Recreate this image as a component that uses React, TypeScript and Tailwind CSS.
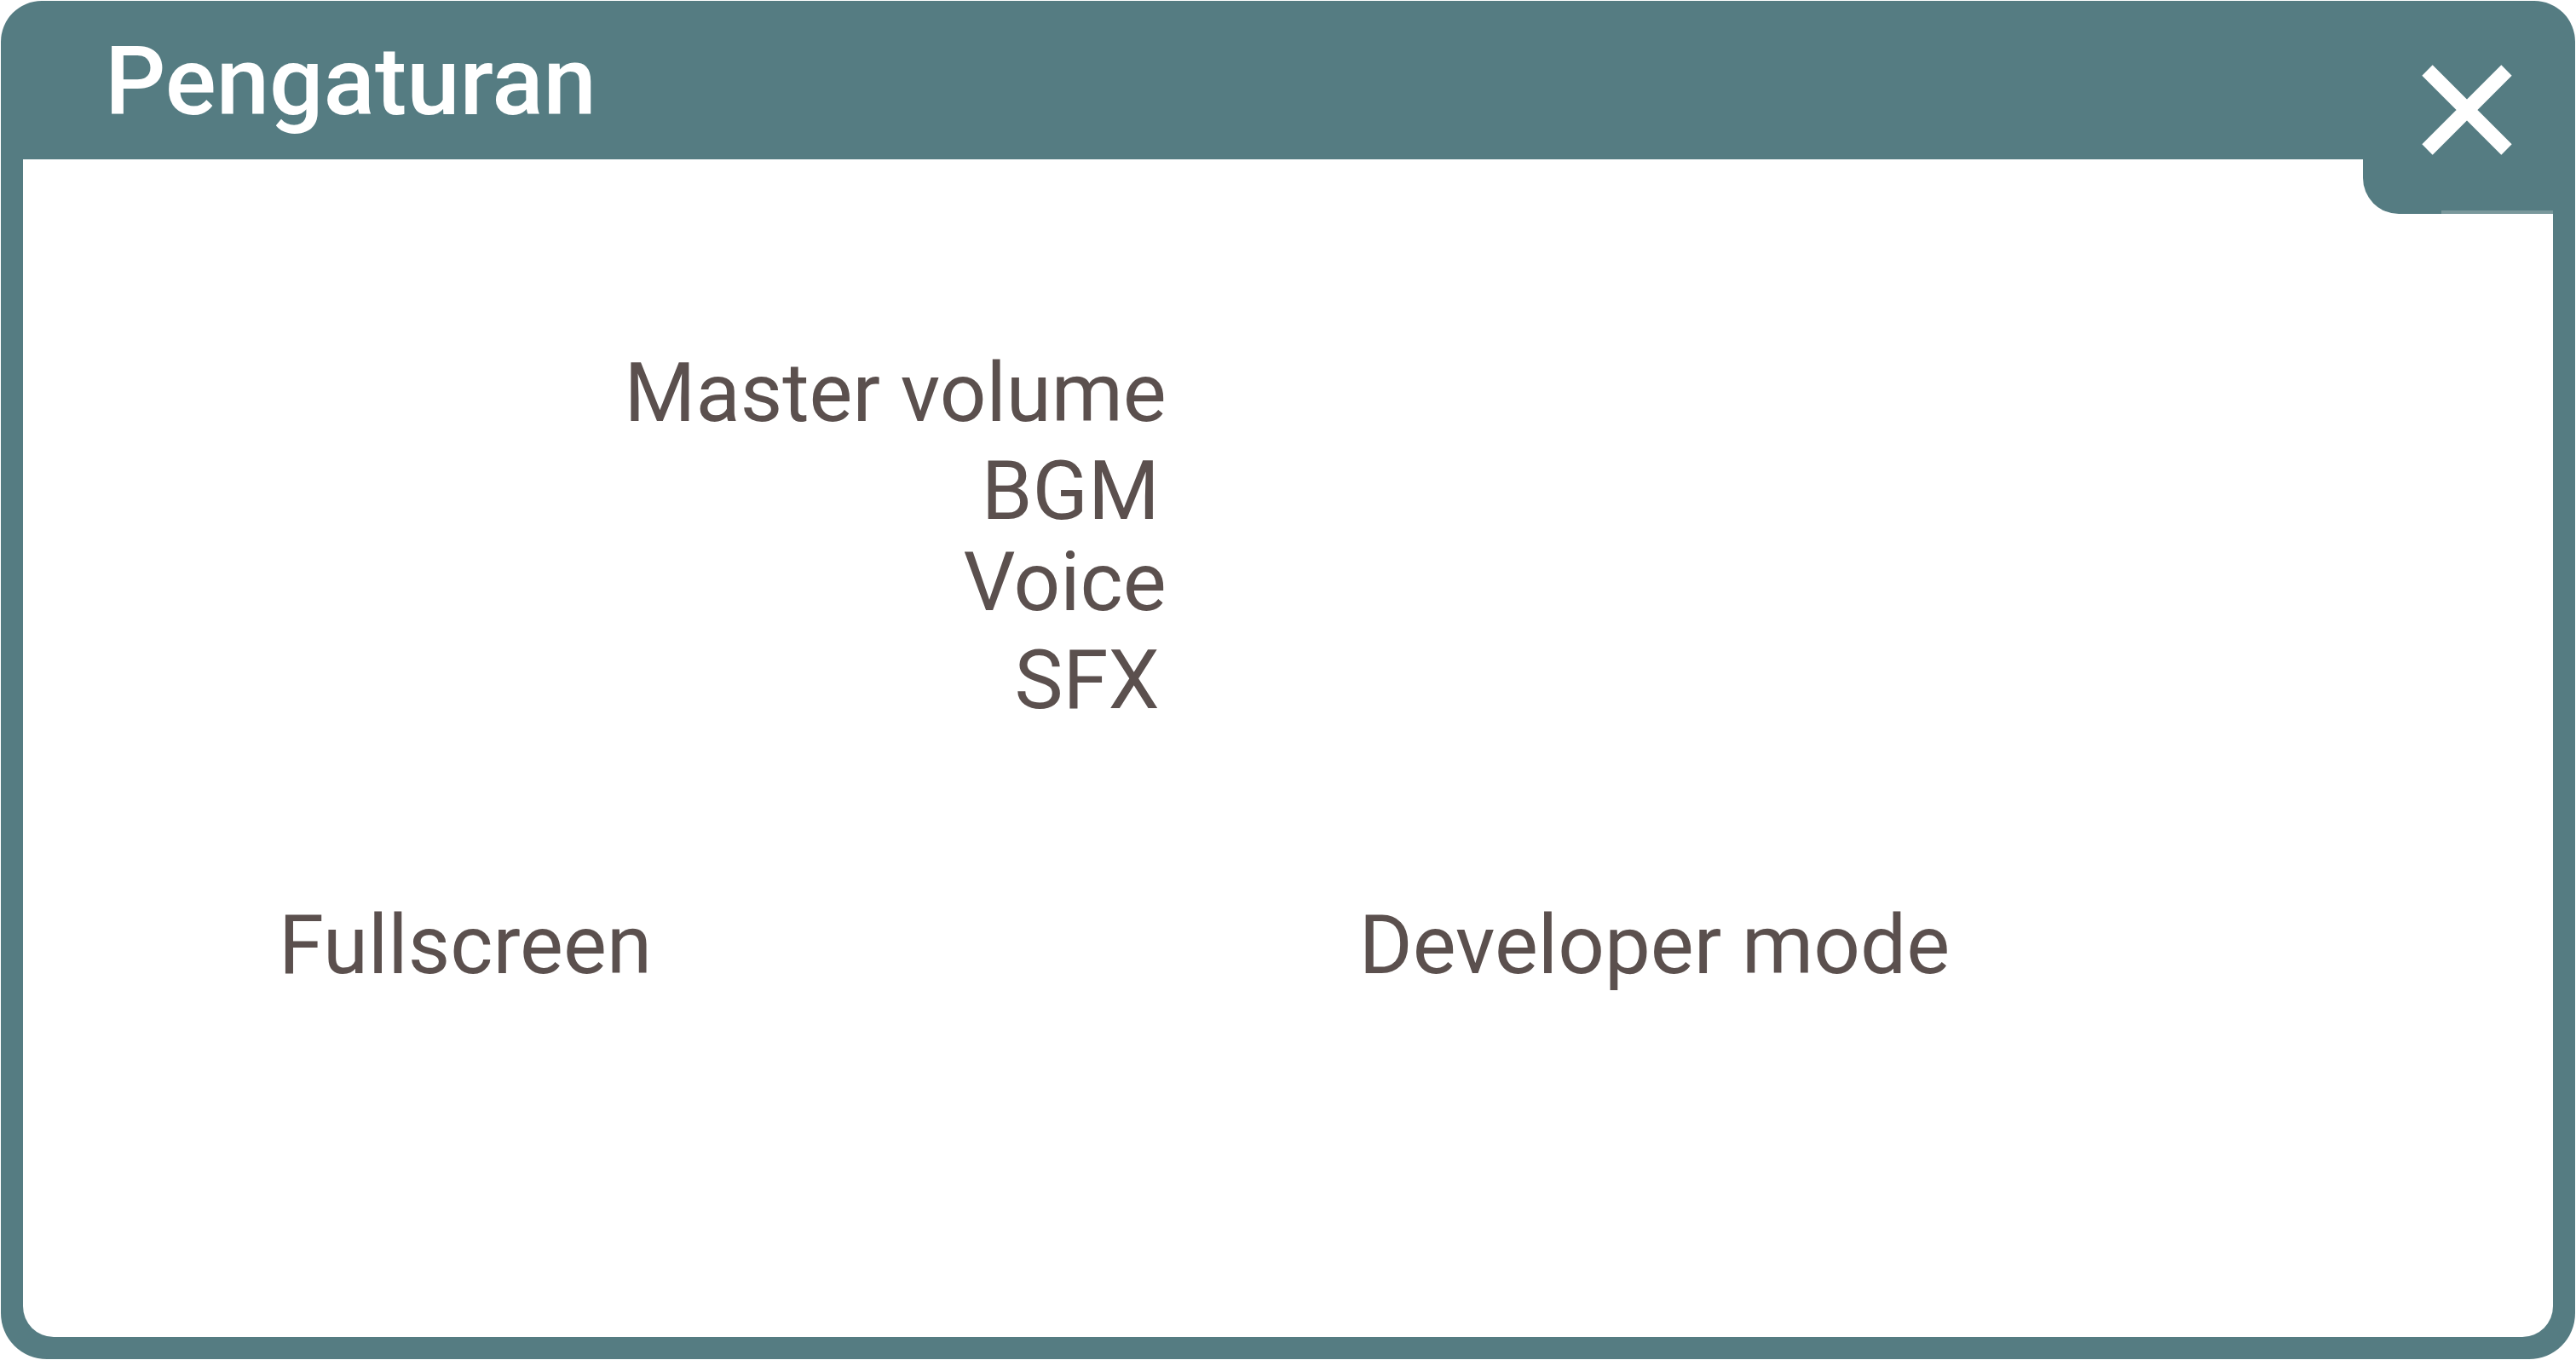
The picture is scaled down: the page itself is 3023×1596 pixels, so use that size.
const volumeRows = [
  { label: "Master volume", className: "h-[115px]" },
  { label: "BGM", className: "h-[107px] pr-2" },
  { label: "Voice", className: "h-[115px]" },
  { label: "SFX", className: "h-[115px] pr-2" },
];

function CloseButton() {
  return (
    <button
      type="button"
      aria-label="Tutup"
      className="absolute top-[50px] right-[26px] flex h-[200px] w-[223px] cursor-pointer justify-end rounded-bl-[42px] bg-[#557c82] pt-[25px] pr-12"
    >
      <svg viewBox="0 0 106 106" className="size-[106px]" aria-hidden="true">
        <path
          d="M6.5 6.5 99.5 99.5M99.5 6.5 6.5 99.5"
          stroke="white"
          strokeWidth="17.5"
          fill="none"
        />
      </svg>
      <span className="absolute right-0 bottom-0 h-1 w-[131px] bg-[#7a989c]" />
    </button>
  );
}

export default function App() {
  return (
    <div className="min-h-screen bg-white p-px font-['Roboto',sans-serif]">
      <section className="relative flex min-h-[calc(100vh-2px)] flex-col rounded-t-[48px] rounded-b-[54px] bg-[#557c82] px-[26px] pb-[26px]">
        <header className="flex h-[186px] items-center px-24 pt-1">
          <h1 className="text-[112px] leading-none font-medium text-white">
            Pengaturan
          </h1>
        </header>
        <CloseButton />
        <main className="flex-1 rounded-b-[36px] bg-white pt-[226px] text-8xl leading-none font-[450] text-[#5b504e]">
          <ul className="w-[46%] pr-6 text-right">
            {volumeRows.map((row) => (
              <li key={row.label} className={row.className}>
                {row.label}
              </li>
            ))}
          </ul>
          <div className="grid grid-cols-[46%_1fr] pt-[196px] pl-[300px]">
            <h2>Fullscreen</h2>
            <h2 className="pl-10">Developer mode</h2>
          </div>
        </main>
      </section>
    </div>
  );
}
